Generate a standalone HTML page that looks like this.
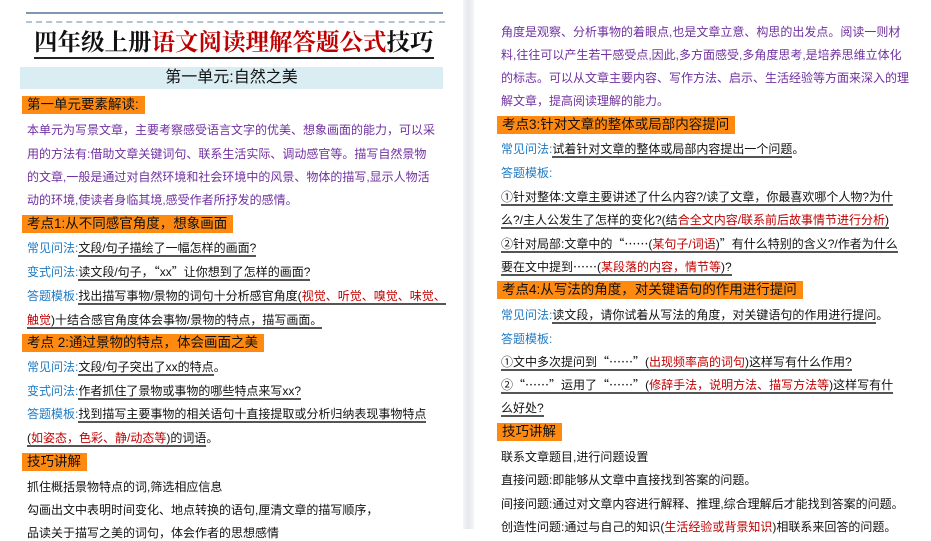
<!DOCTYPE html>
<html><head><meta charset="utf-8"><style>
*{margin:0;padding:0;box-sizing:border-box}
body{width:931px;height:529px;overflow:hidden;background:#fff;font-family:"Liberation Sans","Noto Sans CJK SC",sans-serif;font-size:12px;color:#111;position:relative}
.l{position:absolute;white-space:nowrap;line-height:16px}
.p{color:#7030a0}
.b{color:#1f7ac2}
.r{color:#c00000}
.u{border-bottom:2px solid #555}
.q{font-family:"Noto Sans CJK SC",sans-serif}
.o{position:absolute;background:#ff8a12;font-size:13.5px;line-height:18px;height:18px;padding:0 6px 0 5px;white-space:nowrap;color:#111}
#gut{position:absolute;left:463px;top:0;width:11px;height:529px;background:linear-gradient(90deg,#f4f5f8,#e6e8ee,#f4f5f8)}
</style></head><body>
<div style="position:absolute;left:26px;top:12px;width:417px;height:2px;background:#7f97b5"></div>
<div style="position:absolute;left:26px;top:21px;width:419px;border-top:2px dashed #b4c3d6"></div>
<div class="l" style="left:34px;top:30px;font-family:'Liberation Serif','Noto Serif CJK SC',serif;font-size:23.5px;font-weight:bold;line-height:27px;border-bottom:2px solid #222">四年级上册<span class="r">语文阅读理解答题公式</span>技巧</div>
<div style="position:absolute;left:20px;top:67px;width:423px;height:22px;background:#daedf3;text-align:center;font-size:16px;line-height:22px">第一单元:自然之美</div>
<div class="o" style="left:22px;top:96px">第一单元要素解读:</div>
<div class="l p" style="left:27px;top:122px">本单元为写景文章，主要考察感受语言文字的优美、想象画面的能力，可以采</div>
<div class="l p" style="left:27px;top:146px">用的方法有:借助文章关键词句、联系生活实际、调动感官等。描写自然景物</div>
<div class="l p" style="left:27px;top:169px">的文章,一般是通过对自然环境和社会环境中的风景、物体的描写,显示人物活</div>
<div class="l p" style="left:27px;top:192px">动的环境,使读者身临其境,感受作者所抒发的感情。</div>
<div class="o" style="left:22px;top:215px">考点1:从不同感官角度，想象画面</div>
<div class="l" style="left:27px;top:240px"><span class="b">常见问法:</span><span class="u">文段/句子描绘了一幅怎样的画面?</span></div>
<div class="l" style="left:27px;top:264px"><span class="b">变式问法:</span><span class="u">读文段/句子，<span class="q">“</span>xx<span class="q">”</span>让你想到了怎样的画面?</span></div>
<div class="l" style="left:27px;top:288px"><span class="b">答题模板:</span><span class="u">找出描写事物/景物的词句十分析感官角度(<span class="r">视觉、听觉、嗅觉、味觉、</span></span></div>
<div class="l" style="left:27px;top:312px"><span class="u"><span class="r">触觉</span>)十结合感官角度体会事物/景物的特点，描写画面。</span></div>
<div class="o" style="left:22px;top:334px">考点 2:通过景物的特点，体会画面之美</div>
<div class="l" style="left:27px;top:359px"><span class="b">常见问法:</span><span class="u">文段/句子突出了xx的特点</span>。</div>
<div class="l" style="left:27px;top:383px"><span class="b">变式问法:</span><span class="u">作者抓住了景物或事物的哪些特点来写xx?</span></div>
<div class="l" style="left:27px;top:406px"><span class="b">答题模板:</span><span class="u">找到描写主要事物的相关语句十直接提取或分析归纳表现事物特点</span></div>
<div class="l" style="left:27px;top:430px"><span class="u">(<span class="r">如姿态，色彩、静/动态等</span>)的词语</span>。</div>
<div class="o" style="left:22px;top:453px">技巧讲解</div>
<div class="l" style="left:27px;top:479px">抓住概括景物特点的词,筛选相应信息</div>
<div class="l" style="left:27px;top:502px">勾画出文中表明时间变化、地点转换的语句,厘清文章的描写顺序，</div>
<div class="l" style="left:27px;top:525px">品读关于描写之美的词句，体会作者的思想感情</div>
<div id="gut"></div>
<div class="l p" style="left:501px;top:24px">角度是观察、分析事物的着眼点,也是文章立意、构思的出发点。阅读一则材</div>
<div class="l p" style="left:501px;top:47px">料,往往可以产生若干感受点,因此,多方面感受,多角度思考,是培养思维立体化</div>
<div class="l p" style="left:501px;top:70px">的标志。可以从文章主要内容、写作方法、启示、生活经验等方面来深入的理</div>
<div class="l p" style="left:501px;top:93px">解文章，提高阅读理解的能力。</div>
<div class="o" style="left:497px;top:116px">考点3:针对文章的整体或局部内容提问</div>
<div class="l" style="left:501px;top:141px"><span class="b">常见问法:</span><span class="u">试着针对文章的整体或局部内容提出一个问题</span>。</div>
<div class="l b" style="left:501px;top:165px">答题模板:</div>
<div class="l" style="left:501px;top:189px"><span class="u">①针对整体:文章主要讲述了什么内容?/读了文章，你最喜欢哪个人物?为什</span></div>
<div class="l" style="left:501px;top:212px"><span class="u">么?/主人公发生了怎样的变化?(结<span class="r">合全文内容/联系前后故事情节进行分析</span>)</span></div>
<div class="l" style="left:501px;top:236px"><span class="u">②针对局部:文章中的<span class="q">“……</span>(<span class="r">某句子/词语</span>)<span class="q">”</span>有什么特别的含义?/作者为什么</span></div>
<div class="l" style="left:501px;top:259px"><span class="u">要在文中提到<span class="q">……</span>(<span class="r">某段落的内容，情节等</span>)?</span></div>
<div class="o" style="left:497px;top:281px">考点4:从写法的角度，对关键语句的作用进行提问</div>
<div class="l" style="left:501px;top:307px"><span class="b">常见问法:</span><span class="u">读文段，请你试着从写法的角度，对关键语句的作用进行提问</span>。</div>
<div class="l b" style="left:501px;top:331px">答题模板:</div>
<div class="l" style="left:501px;top:354px"><span class="u">①文中多次提问到<span class="q">“……”</span>(<span class="r">出现频率高的词句</span>)这样写有什么作用?</span></div>
<div class="l" style="left:501px;top:377px"><span class="u">②<span class="q">“……”</span>运用了<span class="q">“……”</span>(<span class="r">修辞手法，说明方法、描写方法等</span>)这样写有什</span></div>
<div class="l" style="left:501px;top:400px"><span class="u">么好处?</span></div>
<div class="o" style="left:497px;top:423px">技巧讲解</div>
<div class="l" style="left:501px;top:449px">联系文章题目,进行问题设置</div>
<div class="l" style="left:501px;top:472px">直接问题:即能够从文章中直接找到答案的问题。</div>
<div class="l" style="left:501px;top:496px">间接问题:通过对文章内容进行解释、推理,综合理解后才能找到答案的问题。</div>
<div class="l" style="left:501px;top:519px">创造性问题:通过与自己的知识(<span class="r">生活经验或背景知识</span>)相联系来回答的问题。</div>
</body></html>
